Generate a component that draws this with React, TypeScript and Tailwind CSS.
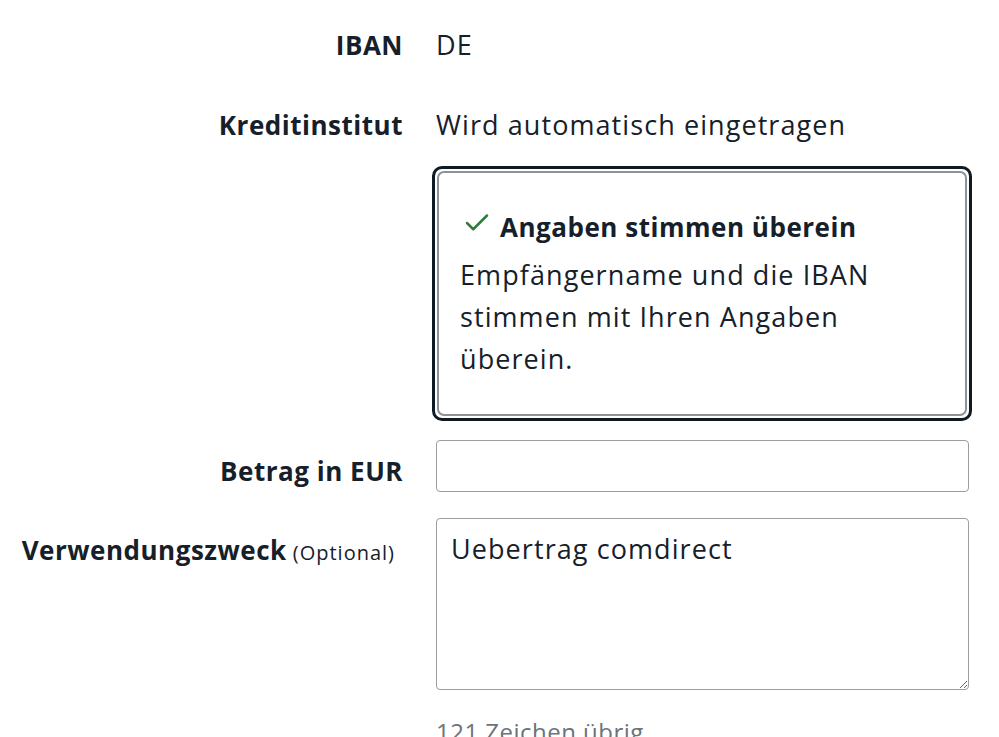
import { Check } from 'lucide-react';

const FONT = "font-['Open_Sans',_'Noto_Sans',_sans-serif]";

export default function App() {
  return (
    <div className={`min-h-[737px] w-[999px] overflow-hidden bg-white text-[#15202a] ${FONT}`}>
      <div className="pt-[25px]">
        {/* IBAN */}
        <div className="grid grid-cols-[403px_533px] gap-x-[33px]">
          <div className="text-right text-[26px] leading-[40px] font-bold tracking-[0.02em]">IBAN</div>
          <div className="text-[27px] leading-[40px] tracking-[0.04em]">DE</div>
        </div>

        {/* Kreditinstitut */}
        <div className="mt-[40px] grid grid-cols-[403px_533px] gap-x-[33px]">
          <div className="text-right text-[26px] leading-[40px] font-bold tracking-[0.02em]">Kreditinstitut</div>
          <div className="text-[27px] leading-[40px] tracking-[0.04em]">Wird automatisch eingetragen</div>
        </div>

        {/* Notice */}
        <div className="mt-[21px] grid grid-cols-[403px_533px] gap-x-[33px]">
          <div />
          <div className="-ml-[4px] w-[540px] rounded-[10px] border-[3px] border-[#0f1a22] p-[2px]">
            <div className="rounded-[7px] border-2 border-[#8d9296] pt-[34px] pr-[20px] pb-[34px] pl-[21px]">
              <div className="flex items-center">
                <Check className="mr-[8px] ml-[2px] h-[30px] w-[30px] -translate-y-[4px] text-[#2e7d3c]" strokeWidth={2} />
                <span className="text-[26px] leading-[40px] font-bold tracking-[0.02em]">Angaben stimmen überein</span>
              </div>
              <p className="mt-[7px] text-[27px] leading-[42px] tracking-[0.04em]">
                Empfängername und die IBAN stimmen mit Ihren Angaben überein.
              </p>
            </div>
          </div>
        </div>

        {/* Betrag */}
        <div className="mt-[19px] grid grid-cols-[403px_533px] gap-x-[33px]">
          <div className="pt-[11px] text-right text-[26px] leading-[40px] font-bold tracking-[0.02em]">Betrag in EUR</div>
          <input
            type="text"
            className="h-[52px] w-[533px] rounded-[4px] border border-[#9a9ea2] px-[14px] text-[27px] outline-none"
          />
        </div>

        {/* Verwendungszweck */}
        <div className="mt-[26px] grid grid-cols-[403px_533px] gap-x-[33px]">
          <div className="pt-[12px] pr-[8px] text-right leading-[40px]">
            <span className="text-[26px] font-bold tracking-[0.02em]">Verwendungszweck</span>
            <span className="ml-[6px] text-[20px] tracking-[0.05em]">(Optional)</span>
          </div>
          <div>
            <textarea
              defaultValue="Uebertrag comdirect"
              className="block h-[172px] w-[533px] resize-y rounded-[4px] border border-[#9a9ea2] px-[14px] pt-[10px] text-[27px] leading-[40px] tracking-[0.04em] text-[#15202a] outline-none"
            />
            <div className="mt-[22px] text-[24px] leading-[40px] tracking-[0.02em] text-[#6d7378]">121 Zeichen übrig</div>
          </div>
        </div>
      </div>
    </div>
  );
}
